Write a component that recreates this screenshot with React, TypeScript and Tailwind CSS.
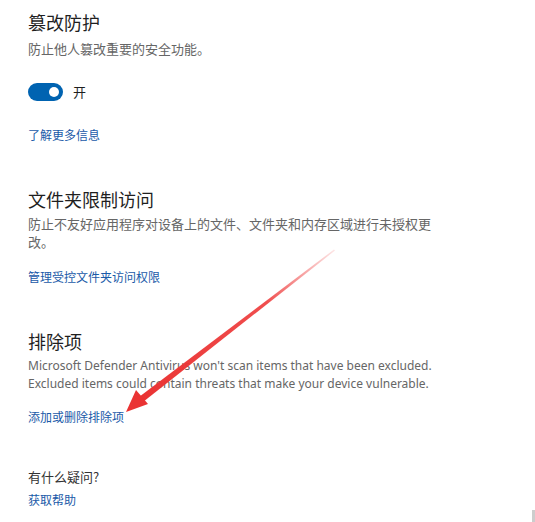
export default function App() {
  const cjk = { fontFamily: '"Noto Sans CJK SC", "Noto Sans", sans-serif' };
  const en = { fontFamily: '"Noto Sans", "Noto Sans CJK SC", sans-serif' };

  return (
    <div className="relative w-[535px] h-[522px] overflow-hidden bg-white" style={cjk}>
      <div className="pl-[28px] pt-[10px] flex flex-col">
        {/* tamper protection */}
        <h2 className="text-[18px] leading-[24px] text-[#1f1f1f]">篡改防护</h2>
        <p className="mt-[6px] text-[13px] leading-[18px] text-[#666666]">防止他人篡改重要的安全功能。</p>
        <div className="mt-[25px] flex items-center gap-[10px] h-[18px]">
          <div className="w-[35px] h-[18px] rounded-full bg-[#0063b1] flex items-center justify-end pr-[4px]">
            <div className="w-[10px] h-[10px] rounded-full bg-white" />
          </div>
          <span className="text-[13px] text-[#1f1f1f]">开</span>
        </div>
        <a className="mt-[25px] text-[12px] leading-[18px] text-[#1a5aa8]">了解更多信息</a>

        {/* folder access */}
        <h2 className="mt-[43px] text-[18px] leading-[24px] text-[#1f1f1f]">文件夹限制访问</h2>
        <p className="mt-[4px] w-[410px] text-[13px] leading-[18px] text-[#666666]">
          防止不友好应用程序对设备上的文件、文件夹和内存区域进行未授权更改。
        </p>
        <a className="mt-[17px] text-[12px] leading-[18px] text-[#1a5aa8]">管理受控文件夹访问权限</a>

        {/* exclusions */}
        <h2 className="mt-[43px] text-[18px] leading-[24px] text-[#1f1f1f]">排除项</h2>
        <p className="mt-[4px] text-[12px] leading-[18px] text-[#666666]" style={en}>
          Microsoft Defender Antivirus won't scan items that have been excluded.
          <br />
          Excluded items could contain threats that make your device vulnerable.
        </p>
        <a className="mt-[15px] text-[12px] leading-[18px] text-[#1a5aa8]">添加或删除排除项</a>

        <p className="mt-[42px] text-[13px] leading-[18px] text-[#333333]">有什么疑问?</p>
        <a className="mt-[5px] text-[12px] leading-[18px] text-[#1a5aa8]">获取帮助</a>
      </div>

      {/* annotation arrow */}
      <svg className="absolute left-0 top-0 pointer-events-none" width="535" height="522">
        <defs>
          <linearGradient id="fade" x1="334" y1="250" x2="140" y2="400" gradientUnits="userSpaceOnUse">
            <stop offset="0" stopColor="#f04a4a" stopOpacity="0.15" />
            <stop offset="0.35" stopColor="#ee3a3a" stopOpacity="0.9" />
            <stop offset="1" stopColor="#ea3333" />
          </linearGradient>
        </defs>
        <polygon points="334,249.5 335,250.5 143,402 139,397" fill="url(#fade)" />
        <polygon points="126,412 136,390 148,404" fill="#ea3333" />
      </svg>

      {/* scrollbar thumb */}
      <div className="absolute right-0 bottom-0 w-[3px] h-[12px] bg-[#cdcdcd]" />
    </div>
  );
}
